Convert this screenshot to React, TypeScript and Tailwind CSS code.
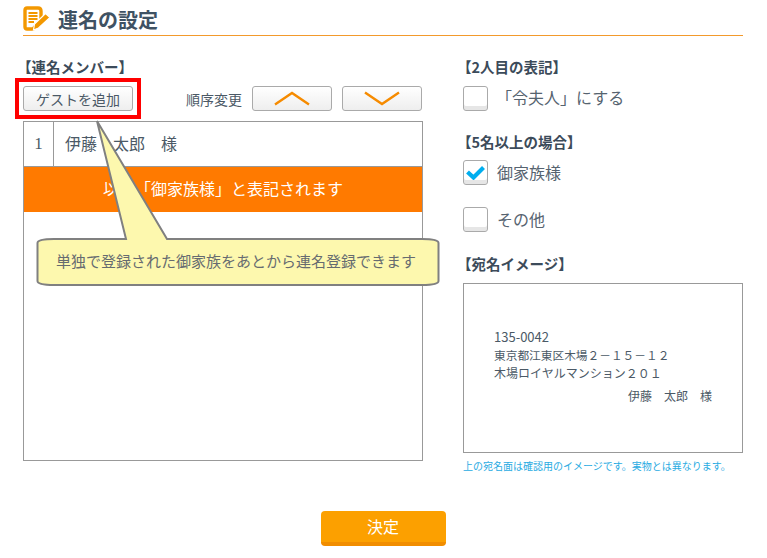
import React from "react";

const sans = "font-['Noto_Sans_CJK_JP','Noto_Sans',sans-serif]";
const btn = "bg-gradient-to-b from-white to-[#eeeeee] border border-[#aaaaaa] rounded-[3px]";

function Check({ checked }: { checked?: boolean }) {
  return (
    <div className="w-[25px] h-[25px] shrink-0 rounded-[3px] border border-[#aaaaaa] bg-white flex items-center justify-center shadow-[inset_0_-4px_0_#e6e6e6]">
      {checked && (
        <svg width="19" height="15" viewBox="0 0 19 15">
          <path d="M1.500 7 L7.500 12.500 L17.500 2.500" fill="none" stroke="#00aeef" strokeWidth="4.200" />
        </svg>
      )}
    </div>
  );
}

function Heading({ children }: { children: React.ReactNode }) {
  return <div className="h-[19px] text-[14.500px] leading-[17px] font-bold text-[#3c4b5a] -ml-[6px] whitespace-nowrap">{children}</div>;
}

export default function App() {
  return (
    <div className={`relative w-[767px] h-[558px] overflow-hidden bg-white px-[23px] text-[#4b5966] ${sans}`}>
      <header className="flex items-start gap-[7px] w-[720px] h-[36px] border-b border-[#f39a2c]">
        <svg width="28" height="25" viewBox="0 0 28 25" className="mt-[6px]">
          <path d="M2 4 Q2 2 4 2 H15 Q18 2 18 5 V14 L10 23 H4 Q2 23 2 21 Z" fill="#fff" stroke="#f39800" strokeWidth="3.400" strokeLinejoin="round" />
          <path d="M5.500 7 H14.500 M5.500 10 H14.500 M5.500 13 H14.500 M5.500 16 H11" stroke="#f39800" strokeWidth="1.800" />
          <path d="M27 11.500 L15.500 22 L10.500 24 L11.500 18 L22.500 7.500 Z" fill="#f39800" stroke="#fff" strokeWidth="1.200" />
        </svg>
        <h1 className="text-[20px] font-bold leading-none text-[#3f5263] mt-[10px]">連名の設定</h1>
      </header>

      <main className="flex gap-[40px] mt-[22px]">
        <section className="w-[400px]">
          <Heading>【連名メンバー】</Heading>
          <div className="flex items-center h-[25px] mt-[9px]">
            <div className="relative">
              <button className={`${btn} w-[110px] h-[25px] text-[14px] leading-none text-[#4b5966] block`}>ゲストを追加</button>
              <div className="absolute -left-[8px] -top-[8px] w-[126px] h-[41px] border-[4px] border-[#ff0000]" />
            </div>
            <span className="ml-[53px] text-[14px] leading-none w-[66px] whitespace-nowrap">順序変更</span>
            <button className={`${btn} w-[80px] h-[25px] flex items-center justify-center`} aria-label="上へ">
              <svg width="36" height="15" viewBox="0 0 36 15">
                <path d="M1 13.500 L18 2 L35 13.500" fill="none" stroke="#f68b00" strokeWidth="2.400" />
              </svg>
            </button>
            <button className={`${btn} w-[80px] h-[25px] ml-[10px] flex items-center justify-center`} aria-label="下へ">
              <svg width="36" height="15" viewBox="0 0 36 15">
                <path d="M1 1.500 L18 13 L35 1.500" fill="none" stroke="#f68b00" strokeWidth="2.400" />
              </svg>
            </button>
          </div>
          <div className="mt-[10px] h-[340px] border border-[#999999]">
            <div className="flex h-[44px] font-['Liberation_Serif','Noto_Sans_CJK_JP',serif] text-[16px] pt-[1px]">
              <div className="w-[30px] -mt-[1px] border-r border-[#999999] flex items-center justify-center text-[17px]">1</div>
              <div className="flex items-center pl-[11px]">伊藤　太郎　様</div>
            </div>
            <div className="h-[46px] border-t border-[#999999] bg-[#ff7a00] flex items-center justify-center text-[16px] leading-[20px] pb-[3px] text-white">
              以上「御家族様」と表記されます
            </div>
          </div>
        </section>

        <section className="w-[280px]">
          <Heading>【2人目の表記】</Heading>
          <div className="flex items-center mt-[9px] h-[25px]">
            <Check />
            <span className="ml-[8px] text-[16px] leading-[20px] pb-[3px] text-[#56636f]">「令夫人」にする</span>
          </div>
          <div className="mt-[22px]">
            <Heading>【5名以上の場合】</Heading>
          </div>
          <div className="flex items-center mt-[8px] h-[25px]">
            <Check checked />
            <span className="ml-[9px] text-[16px] leading-[20px] pb-[2px] text-[#56636f]">御家族様</span>
          </div>
          <div className="flex items-center mt-[22px] h-[25px]">
            <Check />
            <span className="ml-[9px] text-[16px] leading-[20px] pb-[2px] text-[#56636f]">その他</span>
          </div>
          <div className="mt-[23px]">
            <Heading>【宛名イメージ】</Heading>
          </div>
          <div className="mt-[9px] h-[170px] border border-[#999999] pl-[30px] pt-[44px] leading-[18px]">
            <div className="text-[13px]">135-0042</div>
            <div className="whitespace-nowrap text-[11.700px]">東京都江東区木場２－１５－１２</div>
            <div className="whitespace-nowrap text-[12px]">木場ロイヤルマンション２０１</div>
            <div className="mt-[6px] text-right pr-[30px] text-[12px] font-['Liberation_Serif','Noto_Sans_CJK_JP',serif]">伊藤　太郎　様</div>
          </div>
          <p className="mt-[5px] text-[10px] leading-[15px] text-[#29abe2] whitespace-nowrap">上の宛名面は確認用のイメージです。実物とは異なります。</p>
        </section>
      </main>

      <div className="flex justify-center w-[720px] mt-[38px]">
        <button className="w-[125px] h-[35px] rounded-[4px] bg-[#fca000] border-b-[4px] border-[#f18d00] text-white text-[16px] leading-none pb-[2px]">決定</button>
      </div>

      {/* callout tooltip overlapping the list */}
      <div className="absolute left-[36px] top-[238px] w-[404px] h-[48px] flex items-center justify-center">
        <svg width="404" height="48" viewBox="0 0 404 48" className="absolute left-0 top-0 overflow-visible">
          <path
            d="M1.500 5 Q1.500 1 18 1 H90 L61 -117 L131 1 H386 Q402.500 1 402.500 5 V43 Q402.500 47 386 47 H18 Q1.500 47 1.500 43 Z"
            fill="#fdf8ae"
            stroke="#808080"
            strokeWidth="2"
          />
        </svg>
        <span className="relative text-[15px] text-[#666b70] leading-none -mt-[4px] -ml-[4px] whitespace-nowrap">単独で登録された御家族をあとから連名登録できます</span>
      </div>
    </div>
  );
}
